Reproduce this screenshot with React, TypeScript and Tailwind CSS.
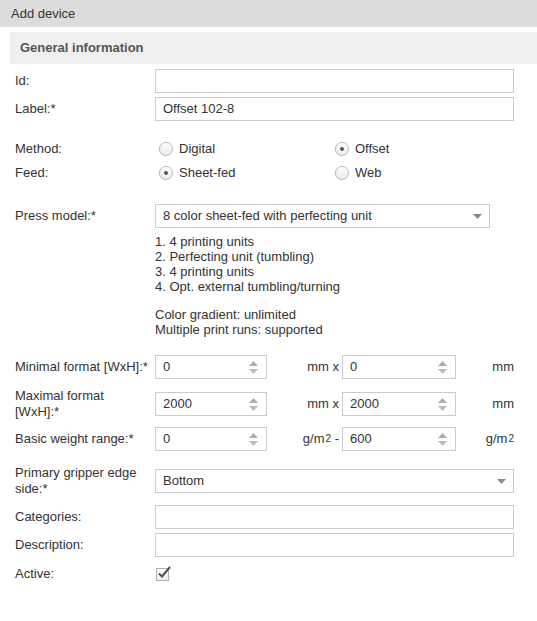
import React from "react";

const inputCls =
  "h-[24px] border border-[#cccccc] bg-white px-[7px] flex items-center text-[13px] text-[#333]";

function Spinner() {
  return (
    <div className="flex flex-col items-center gap-[3px] mr-[1px]">
      <svg width="9" height="5" viewBox="0 0 9 5">
        <polygon points="0,5 4.5,0 9,5" fill="#acacac" />
      </svg>
      <svg width="9" height="5" viewBox="0 0 9 5">
        <polygon points="0,0 9,0 4.5,5" fill="#bcbcbc" />
      </svg>
    </div>
  );
}

function Caret() {
  return (
    <svg width="9" height="5" viewBox="0 0 9 5">
      <polygon points="0,0 9,0 4.5,5" fill="#8a8a8a" />
    </svg>
  );
}

function NumInput({ value, w }: { value: string; w: string }) {
  return (
    <div className={`${inputCls} ${w} justify-between pr-[7px]`}>
      <span>{value}</span>
      <Spinner />
    </div>
  );
}

function Radio({ checked, label }: { checked?: boolean; label: string }) {
  return (
    <div className="flex items-center">
      <div className="w-[14px] h-[14px] rounded-full border border-[#b5b5b5] bg-gradient-to-b from-white to-[#ededed] flex items-center justify-center">
        {checked && <div className="w-[4px] h-[4px] rounded-full bg-[#555]" />}
      </div>
      <span className="ml-[6px]">{label}</span>
    </div>
  );
}

function Row({
  label,
  children,
  className = "",
}: {
  label: React.ReactNode;
  children?: React.ReactNode;
  className?: string;
}) {
  return (
    <div className={`flex items-center ${className}`}>
      <div className="w-[140px] shrink-0 leading-[16px]">{label}</div>
      <div className="flex-1 min-w-0">{children}</div>
    </div>
  );
}

function Sq() {
  return (
    <span>
      g/m<sup className="text-[10px] relative top-[-1px] ml-[1px]">2</sup>
    </span>
  );
}

export default function App() {
  return (
    <div
      className="w-[537px] h-[621px] bg-white text-[13px] text-[#333]"
      style={{ fontFamily: '"Liberation Sans", Arial, sans-serif' }}
    >
      <div className="h-[27px] bg-[#dcdcdc] pl-[11px] flex items-center text-[#333]">
        Add device
      </div>
      <div className="pl-[10px] pt-[5px]">
        <div className="h-[32px] bg-[#f0f0f0] pl-[10px] flex items-center font-bold text-[#555]">
          General information
        </div>
      </div>
      <div className="pl-[15px] pr-[23px]">
        <Row label="Id:" className="mt-[5px]">
          <div className={inputCls} />
        </Row>
        <Row label="Label:*" className="mt-[4px]">
          <div className={inputCls}>Offset 102-8</div>
        </Row>
        <Row label="Method:" className="mt-[16px] h-[24px]">
          <div className="flex pl-[4px]">
            <div className="w-[176px]">
              <Radio label="Digital" />
            </div>
            <Radio checked label="Offset" />
          </div>
        </Row>
        <Row label="Feed:" className="h-[24px]">
          <div className="flex pl-[4px]">
            <div className="w-[176px]">
              <Radio checked label="Sheet-fed" />
            </div>
            <Radio label="Web" />
          </div>
        </Row>
        <Row label="Press model:*" className="mt-[19px]">
          <div className={`${inputCls} w-[335px] justify-between pr-[7px]`}>
            <span>8 color sheet-fed with perfecting unit</span>
            <Caret />
          </div>
        </Row>
        <div className="pl-[140px] mt-[6px] text-[13px] leading-[15px] text-[#333]">
          <div>1. 4 printing units</div>
          <div>2. Perfecting unit (tumbling)</div>
          <div>3. 4 printing units</div>
          <div>4. Opt. external tumbling/turning</div>
          <div className="mt-[13px]">Color gradient: unlimited</div>
          <div>Multiple print runs: supported</div>
        </div>
        <Row label="Minimal format [WxH]:*" className="mt-[18px]">
          <div className="flex items-center">
            <NumInput value="0" w="w-[112px]" />
            <div className="w-[75px] text-right pr-[3px]">mm x</div>
            <NumInput value="0" w="w-[114px]" />
            <div className="flex-1 text-right">mm</div>
          </div>
        </Row>
        <Row
          label={
            <>
              Maximal format
              <br />
              [WxH]:*
            </>
          }
          className="mt-[9px] h-[32px]"
        >
          <div className="flex items-center">
            <NumInput value="2000" w="w-[112px]" />
            <div className="w-[75px] text-right pr-[3px]">mm x</div>
            <NumInput value="2000" w="w-[114px]" />
            <div className="flex-1 text-right">mm</div>
          </div>
        </Row>
        <Row label="Basic weight range:*" className="mt-[7px]">
          <div className="flex items-center">
            <NumInput value="0" w="w-[112px]" />
            <div className="w-[75px] text-right pr-[3px]">
              <Sq /> -
            </div>
            <NumInput value="600" w="w-[114px]" />
            <div className="flex-1 text-right">
              <Sq />
            </div>
          </div>
        </Row>
        <Row
          label={
            <>
              Primary gripper edge
              <br />
              side:*
            </>
          }
          className="mt-[14px] h-[32px]"
        >
          <div className={`${inputCls} justify-between pr-[7px]`}>
            <span>Bottom</span>
            <Caret />
          </div>
        </Row>
        <Row label="Categories:" className="mt-[8px]">
          <div className={inputCls} />
        </Row>
        <Row label="Description:" className="mt-[4px]">
          <div className={inputCls} />
        </Row>
        <Row label="Active:" className="mt-[7px] h-[20px]">
          <div className="relative w-[13px] h-[13px] border border-[#b0b0b0] bg-gradient-to-b from-white to-[#eeeeee] ml-[1px]">
            <svg
              width="14"
              height="14"
              viewBox="0 0 14 14"
              className="absolute left-[0px] top-[-4px]"
            >
              <polyline
                points="2,8.5 5,11.5 13,2"
                fill="none"
                stroke="#505050"
                strokeWidth="2"
              />
            </svg>
          </div>
        </Row>
      </div>
    </div>
  );
}
